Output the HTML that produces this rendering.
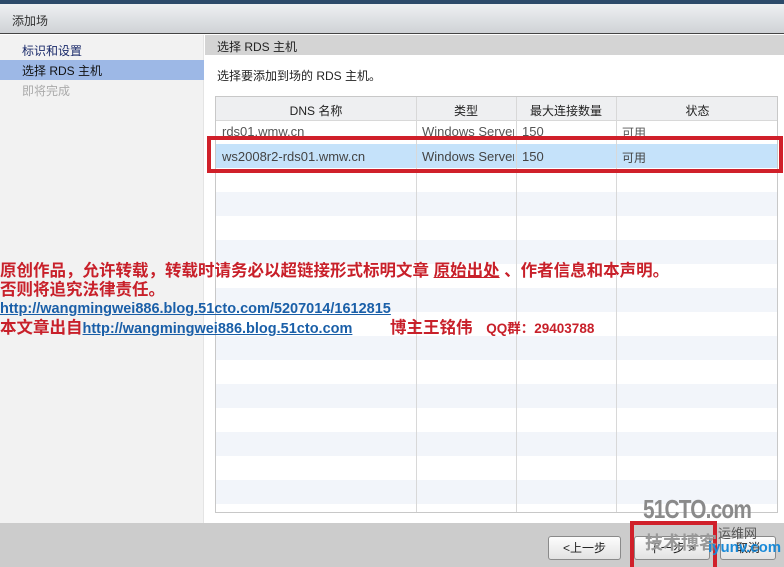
<!DOCTYPE html>
<html><head><meta charset="utf-8"><style>
*{margin:0;padding:0;box-sizing:border-box}
body{width:784px;height:567px;overflow:hidden;position:relative;background:#fff;font-family:"Liberation Sans","Noto Sans CJK SC",sans-serif;font-size:12px;color:#222}
.a{position:absolute}
.red{font-family:"Liberation Sans","Noto Sans CJK SC",sans-serif;font-weight:bold;color:#c8202a;font-size:16.5px;line-height:18px;white-space:nowrap}
.lnk{color:#1a5fa8;text-decoration:underline;font-weight:bold;font-size:14.5px;white-space:nowrap;line-height:18px}
.btn{position:absolute;height:24px;border:1px solid #8a8a8a;border-radius:3px;background:linear-gradient(#fdfdfd,#e2e2e2);font-size:12px;text-align:center;line-height:22px}
</style></head><body>
<div class="a" style="left:0;top:0;width:784px;height:4px;background:#2c4a6a"></div>
<div class="a" style="left:0;top:4px;width:784px;height:30px;background:linear-gradient(#eef0f2,#cfd2d6);border-bottom:1px solid #444"></div>
<div class="a" style="left:12px;top:12px;font-size:12px;color:#333">添加场</div>
<div class="a" style="left:0;top:35px;width:204px;height:488px;background:#f2f2f2;border-right:1px solid #e4e4e4"></div>
<div class="a" style="left:22px;top:42px;color:#1a2a6a">标识和设置</div>
<div class="a" style="left:0;top:60px;width:204px;height:20px;background:#9db8e6"></div>
<div class="a" style="left:22px;top:62px;color:#111">选择 RDS 主机</div>
<div class="a" style="left:22px;top:82px;color:#aaa">即将完成</div>
<div class="a" style="left:205px;top:35px;width:579px;height:20px;background:#d4d4d4"></div>
<div class="a" style="left:217px;top:38px;color:#222">选择 RDS 主机</div>
<div class="a" style="left:217px;top:67px;color:#222">选择要添加到场的 RDS 主机。</div>
<div class="a" style="left:215px;top:96px;width:563px;height:417px;border:1px solid #c8c8c8;background:#fff;overflow:hidden">
<div class="a" style="left:0;top:0;width:563px;height:24px;background:#eeeff1;border-bottom:1px solid #d8d8d8"></div>
<div class="a" style="left:0;top:47px;width:563px;height:24px;background:#c5e2fa"></div>
<div class="a" style="left:0;top:95px;width:563px;height:24px;background:#f2f5fa"></div>
<div class="a" style="left:0;top:143px;width:563px;height:24px;background:#f2f5fa"></div>
<div class="a" style="left:0;top:191px;width:563px;height:24px;background:#f2f5fa"></div>
<div class="a" style="left:0;top:239px;width:563px;height:24px;background:#f2f5fa"></div>
<div class="a" style="left:0;top:287px;width:563px;height:24px;background:#f2f5fa"></div>
<div class="a" style="left:0;top:335px;width:563px;height:24px;background:#f2f5fa"></div>
<div class="a" style="left:0;top:383px;width:563px;height:24px;background:#f2f5fa"></div>
<div class="a" style="left:200px;top:0;width:1px;height:417px;background:#d8d8d8"></div>
<div class="a" style="left:300px;top:0;width:1px;height:417px;background:#d8d8d8"></div>
<div class="a" style="left:400px;top:0;width:1px;height:417px;background:#d8d8d8"></div>
<div class="a" style="left:0;top:5px;width:200px;text-align:center">DNS 名称</div>
<div class="a" style="left:200px;top:5px;width:100px;text-align:center">类型</div>
<div class="a" style="left:300px;top:5px;width:100px;text-align:center">最大连接数量</div>
<div class="a" style="left:400px;top:5px;width:163px;text-align:center">状态</div>
<div class="a" style="left:6px;top:27px;color:#555;font-size:13px">rds01.wmw.cn</div>
<div class="a" style="left:206px;top:27px;color:#555;font-size:13px;width:92px;overflow:hidden;white-space:nowrap">Windows Server</div>
<div class="a" style="left:306px;top:27px;color:#555;font-size:13px">150</div>
<div class="a" style="left:406px;top:27px;color:#555">可用</div>
<div class="a" style="left:6px;top:52px;color:#444;font-size:13px">ws2008r2-rds01.wmw.cn</div>
<div class="a" style="left:206px;top:52px;color:#444;font-size:13px;width:92px;overflow:hidden;white-space:nowrap">Windows Server</div>
<div class="a" style="left:306px;top:52px;color:#444;font-size:13px">150</div>
<div class="a" style="left:406px;top:52px;color:#444">可用</div>
</div>
<div class="a" style="left:207px;top:136px;width:576px;height:37px;border:4px solid #d0202a"></div>
<div class="a" style="left:0;top:523px;width:784px;height:44px;background:#cccccc"></div>
<div class="btn" style="left:548px;top:536px;width:73px">&lt;上一步</div>
<div class="btn" style="left:634px;top:536px;width:76px">下一步 &gt;</div>
<div class="btn" style="left:720px;top:536px;width:56px">取消</div>
<div class="a" style="left:630px;top:521px;width:87px;height:46px;border:4px solid #d0202a;border-bottom:none"></div>
<div class="a" style="left:643px;top:496px;font-size:26px;line-height:26px;font-weight:bold;color:#8a8a8a;letter-spacing:-1px;transform:scaleX(0.8);transform-origin:left top;white-space:nowrap">51CTO.com</div>
<div class="a" style="left:645px;top:533px;font-size:18px;font-weight:bold;color:#999;line-height:20px">技术博客</div>
<div class="a" style="left:718px;top:527px;font-size:13px;color:#555;line-height:14px">运维网</div>
<div class="a" style="left:708px;top:540px;font-size:15px;font-weight:bold;color:#1a8ad8;line-height:16px">iyunv.com</div>
<div class="a red" style="left:0;top:262px">原创作品，允许转载，转载时请务必以超链接形式标明文章 <u>原始出处</u> 、作者信息和本声明。</div>
<div class="a red" style="left:0;top:281px">否则将追究法律责任。</div>
<div class="a lnk" style="left:0;top:300px">http://wangmingwei886.blog.51cto.com/5207014/1612815</div>
<div class="a red" style="left:0;top:319px">本文章出自<span class="lnk">http://wangmingwei886.blog.51cto.com</span></div>
<div class="a red" style="left:390px;top:319px">博主王铭伟 &nbsp;&nbsp;<span style="font-size:13.5px">QQ群：29403788</span></div>
</body></html>
